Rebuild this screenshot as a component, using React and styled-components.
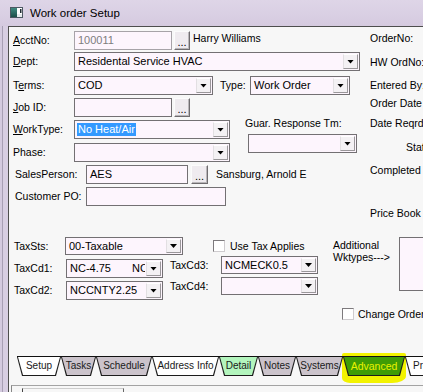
import React from 'react';
import styled, { createGlobalStyle } from 'styled-components';

const Global = createGlobalStyle`
  html, body { margin: 0; padding: 0; overflow: hidden; background: #d8cee2; }
  body { font-family: "Liberation Sans", Arial, sans-serif; color: #000; }
  * { box-sizing: border-box; }
`;

const Window = styled.div`
  width: 423px;
  height: 392px;
  display: flex;
  flex-direction: column;
  background: #d8cee2;
  overflow: hidden;
`;

const TitleBar = styled.div`
  height: 26px;
  flex-shrink: 0;
  display: flex;
  align-items: center;
  gap: 7px;
  padding: 0 0 1px 10px;
  background: linear-gradient(to bottom, #ded5e7 0%, #d9cfe3 60%, #d5cadf 100%);
`;

const TitleText = styled.span`
  font-size: 11.5px;
`;

const Body = styled.div`
  flex: 1;
  display: flex;
  min-height: 0;
`;

const Frame = styled.div`
  width: 8px;
  flex-shrink: 0;
  background: linear-gradient(to right, #d4cadf 0 2px, #a89fb4 2px 3px, #d8cee2 3px);
`;

const Client = styled.div`
  flex: 1;
  min-width: 0;
  display: flex;
  flex-direction: column;
  background: #f7f7f7;
  border-left: 1px solid #4e4e4e;
  border-top: 1px solid #4e4e4e;
  overflow: hidden;
  white-space: nowrap;
`;

const TopSection = styled.div`
  height: 210px;
  flex-shrink: 0;
  display: flex;
`;

const LeftForm = styled.div`
  width: 352px;
  flex-shrink: 0;
  padding-left: 4px;
  display: flex;
  flex-direction: column;
`;

const Row = styled.div`
  display: flex;
  align-items: center;
  height: ${p => p.$h ?? 19}px;
  margin-top: ${p => p.$mt ?? 0}px;
  flex-shrink: 0;
`;

const Label = styled.span`
  width: ${p => p.$w ?? 61}px;
  padding-left: ${p => p.$pl ?? 0}px;
  flex-shrink: 0;
  font-size: 10.5px;
  line-height: 13px;
`;

const Side = styled.span`
  margin-left: ${p => p.$ml ?? 0}px;
  font-size: 10.5px;
  line-height: 13px;
  margin-top: ${p => p.$mt ?? 0}px;
`;

const Field = styled.div`
  width: ${p => p.$w}px;
  height: ${p => p.$h ?? 19}px;
  flex-shrink: 0;
  display: flex;
  align-items: center;
  background: #fdf5fd;
  border: 1px solid ${p => (p.$disabled ? '#a7a3a8' : '#737073')};
  font-size: 11px;
  color: ${p => (p.$disabled ? '#7d7d7d' : '#000')};
  margin-left: ${p => p.$ml ?? 0}px;
  overflow: hidden;
`;

const Value = styled.span`
  flex: 1;
  min-width: 0;
  display: flex;
  padding-left: 3px;
  overflow: hidden;
  line-height: 13px;
`;

const Cell = styled.span`
  width: ${p => p.$w}px;
  flex-shrink: 0;
`;

const Selected = styled.span`
  background: #3399ff;
  color: #fff;
  padding: 0 1px;
  margin-left: -1px;
`;

const ArrowBtn = styled.span`
  width: 15px;
  align-self: stretch;
  margin: 1px;
  flex-shrink: 0;
  display: flex;
  align-items: center;
  justify-content: center;
  background: #f4f1f4;
  border: 1px solid;
  border-color: #ffffff #9a979a #9a979a #e2dfe2;
`;

const Tri = styled.span`
  width: 7px;
  height: 4px;
  background: #000;
  clip-path: polygon(0 0, 100% 0, 50% 100%);
`;

const DotsBtn = styled.div`
  width: ${p => p.$w ?? 16}px;
  height: 19px;
  flex-shrink: 0;
  margin-left: ${p => p.$ml ?? 2}px;
  display: flex;
  align-items: flex-end;
  justify-content: center;
  padding-bottom: 2px;
  background: #efebef;
  border: 1px solid;
  border-color: #fbfbfb #6f6c6f #6f6c6f #fbfbfb;
  box-shadow: inset -1px -1px 0 #b9b6b9;
  font-size: 11px;
  line-height: 10px;
`;

const Split = styled.div`
  display: flex;
`;

const SplitLeft = styled.div`
  width: 217px;
  flex-shrink: 0;
  display: flex;
  flex-direction: column;
`;

const GuarBlock = styled.div`
  margin-left: 15px;
  display: flex;
  flex-direction: column;
`;

const GuarLabel = styled.span`
  font-size: 10.5px;
  line-height: 13px;
`;

const GuarSelect = styled.div`
  margin: 4px 0 0 3px;
`;

const RightCol = styled.div`
  margin-left: 9px;
  display: flex;
  flex-direction: column;
`;

const RLabel = styled.span`
  font-size: 10.5px;
  line-height: 13px;
  margin-top: ${p => p.$mt}px;
  padding-left: ${p => p.$pl ?? 0}px;
`;

const TaxSection = styled.div`
  display: flex;
  padding-left: 5px;
  flex-shrink: 0;
`;

const TaxLeft = styled.div`
  width: 319px;
  flex-shrink: 0;
  display: flex;
  flex-direction: column;
`;

const TaxGrid = styled.div`
  display: flex;
`;

const TaxCol = styled.div`
  width: ${p => p.$w}px;
  flex-shrink: 0;
  display: flex;
  flex-direction: column;
`;

const Check = styled.span`
  width: 12px;
  height: 12px;
  flex-shrink: 0;
  margin-left: ${p => p.$ml ?? 0}px;
  background: #fff;
  border: 1px solid;
  border-color: #7d7a7d #cfcccf #cfcccf #7d7a7d;
`;

const Additional = styled.div`
  width: 66px;
  flex-shrink: 0;
  margin-top: 2px;
  font-size: 10.5px;
  line-height: 12px;
  display: flex;
  flex-direction: column;
`;

const AddBox = styled.div`
  width: 40px;
  height: 54px;
  flex-shrink: 0;
  background: #fdf5fd;
  border: 1px solid #737073;
`;

const ChangeRow = styled.div`
  display: flex;
  align-items: center;
  height: 12px;
  margin-top: 8px;
  padding-left: 333px;
  flex-shrink: 0;
`;

const TabStrip = styled.div`
  margin-top: auto;
  flex-shrink: 0;
  position: relative;
  z-index: 0;
`;

const TabRule = styled.div`
  height: 1px;
  margin-left: 8px;
  background: #111;
  position: relative;
  z-index: 2;
`;

const TabRow = styled.div`
  display: flex;
  padding-left: 8px;
  height: 19px;
`;

const TabSlot = styled.div`
  position: relative;
  flex-shrink: 0;
`;

const Highlight = styled.div`
  position: absolute;
  left: -1px;
  right: -1px;
  top: -4px;
  bottom: -7px;
  background: #f3f300;
  border-radius: 2px 2px 14px 8px / 2px 2px 7px 5px;
  z-index: 0;
`;

const Tab = styled.div`
  position: relative;
  z-index: 1;
  width: ${p => p.$w}px;
  height: 19px;
  padding: 0 1px 1px;
  background: #1c1c1c;
  clip-path: polygon(0 0, 100% 0, calc(100% - 5px) 100%, 5px 100%);
`;

const TabFace = styled.div`
  height: 100%;
  display: flex;
  align-items: center;
  justify-content: center;
  padding-bottom: 1px;
  background: ${p => p.$bg};
  color: ${p => p.$fg ?? '#1a1a1a'};
  font-size: ${p => p.$fs ?? 10}px;
  clip-path: polygon(0 0, 100% 0, calc(100% - 5px) 100%, 5px 100%);
`;

const BottomArea = styled.div`
  height: 16px;
  padding: 9px 0 0 2px;
`;

const BottomFrame = styled.div`
  height: 100%;
  border-top: 1px solid #a3a3a3;
  border-left: 1px solid #878787;
  padding: 2px 0 0 10px;
`;

const InnerBox = styled.div`
  width: 102px;
  height: 100%;
  border-left: 1px solid #454545;
  border-top: 1px solid #cdcdcd;
  border-right: 1px solid #676767;
`;

const Select = ({ w, h, children }) => (
  <Field $w={w} $h={h}>
    <Value>{children}</Value>
    <ArrowBtn><Tri /></ArrowBtn>
  </Field>
);

const AppIcon = () => (
  <svg width="13" height="11" viewBox="0 0 13 11">
    <defs>
      <linearGradient id="ig" x1="0" y1="0" x2="0" y2="1">
        <stop offset="0" stopColor="#3f8a80" />
        <stop offset="1" stopColor="#1c4f4a" />
      </linearGradient>
    </defs>
    <rect x="0.5" y="0.5" width="12" height="10" fill="#e6ecee" stroke="#4d5963" />
    <rect x="1" y="1" width="6" height="9" fill="url(#ig)" />
    <rect x="7" y="1" width="5" height="6" fill="#ffffff" />
    <rect x="10" y="2" width="1.5" height="4" fill="#1e2a30" />
  </svg>
);

const tabs = [
  { label: 'Setup', w: 44, bg: '#ffffff' },
  { label: 'Tasks', w: 35, bg: '#cbc3cb' },
  { label: 'Schedule', w: 56, bg: '#cbc3cb' },
  { label: 'Address Info', w: 67, bg: '#ffffff' },
  { label: 'Detail', w: 39, bg: '#b3f5bd' },
  { label: 'Notes', w: 38, bg: '#cbc3cb' },
  { label: 'Systems', w: 47, bg: '#cbc3cb' },
  { label: 'Advanced', w: 62, bg: '#3f9c05', fg: '#e9f200', fs: 10.5, marked: true },
  { label: 'Production', w: 64, bg: '#ffffff' },
];

export default function App() {
  return (
    <>
      <Global />
      <Window>
        <TitleBar>
          <AppIcon />
          <TitleText>Work order Setup</TitleText>
        </TitleBar>
        <Body>
          <Frame />
          <Client>
            <TopSection>
              <LeftForm>
                <Row $mt={4}>
                  <Label><u>A</u>cctNo:</Label>
                  <Field $w={98} $disabled><Value>100011</Value></Field>
                  <DotsBtn>...</DotsBtn>
                  <Side $ml={3} $mt={-5}>Harry Williams</Side>
                </Row>
                <Row $mt={2}>
                  <Label><u>D</u>ept:</Label>
                  <Select w={286}>Residental Service HVAC</Select>
                </Row>
                <Row $mt={5}>
                  <Label>T<u>e</u>rms:</Label>
                  <Select w={139}>COD</Select>
                  <Label $w={37} $pl={7}>Type:</Label>
                  <Select w={100}>Work Order</Select>
                </Row>
                <Row $mt={3}>
                  <Label><u>J</u>ob ID:</Label>
                  <Field $w={98}><Value /></Field>
                  <DotsBtn>...</DotsBtn>
                </Row>
                <Split>
                  <SplitLeft>
                    <Row $mt={3}>
                      <Label><u>W</u>orkType:</Label>
                      <Select w={156}><Selected>No Heat/Air</Selected></Select>
                    </Row>
                    <Row $mt={4}>
                      <Label>Phase:</Label>
                      <Select w={156} />
                    </Row>
                  </SplitLeft>
                  <GuarBlock>
                    <GuarLabel>Guar. Response Tm:</GuarLabel>
                    <GuarSelect>
                      <Select w={109} />
                    </GuarSelect>
                  </GuarBlock>
                </Split>
                <Row $mt={3}>
                  <Label $w={73} $pl={2}>SalesPerson:</Label>
                  <Field $w={102}><Value>AES</Value></Field>
                  <DotsBtn $w={17} $ml={3}>...</DotsBtn>
                  <Side $ml={8}>Sansburg, Arnold E</Side>
                </Row>
                <Row $mt={3}>
                  <Label $w={73} $pl={2}>Customer PO:</Label>
                  <Field $w={140}><Value /></Field>
                </Row>
              </LeftForm>
              <RightCol>
                <RLabel $mt={5}>OrderNo:</RLabel>
                <RLabel $mt={11}>HW OrdNo:</RLabel>
                <RLabel $mt={10}>Entered By:</RLabel>
                <RLabel $mt={5}>Order Date</RLabel>
                <RLabel $mt={7}>Date Reqrd</RLabel>
                <RLabel $mt={11} $pl={36}>Status:</RLabel>
                <RLabel $mt={10}>Completed</RLabel>
                <RLabel $mt={30}>Price Book</RLabel>
              </RightCol>
            </TopSection>

            <TaxSection>
              <TaxLeft>
                <Row $h={18}>
                  <Label $w={51}>TaxSts:</Label>
                  <Select w={118} h={18}>00-Taxable</Select>
                  <Check $ml={30} />
                  <Side $ml={5}>Use Tax Applies</Side>
                </Row>
                <TaxGrid>
                  <TaxCol $w={156}>
                    <Row $mt={4}>
                      <Label $w={52}>TaxCd1:</Label>
                      <Select w={97}>
                        <Cell $w={62}>NC-4.75</Cell>
                        <span>NCDOR</span>
                      </Select>
                    </Row>
                    <Row $mt={3}>
                      <Label $w={52}>TaxCd2:</Label>
                      <Select w={97}>NCCNTY2.25</Select>
                    </Row>
                  </TaxCol>
                  <TaxCol $w={160}>
                    <Row $mt={1} $h={18}>
                      <Label $w={51}>TaxCd3:</Label>
                      <Select w={97} h={18}>NCMECK0.5</Select>
                    </Row>
                    <Row $mt={3} $h={18}>
                      <Label $w={51}>TaxCd4:</Label>
                      <Select w={97} h={18} />
                    </Row>
                  </TaxCol>
                </TaxGrid>
              </TaxLeft>
              <Additional>
                <span>Additional</span>
                <span>Wktypes---&gt;</span>
              </Additional>
              <AddBox />
            </TaxSection>

            <ChangeRow>
              <Check />
              <Side $ml={4}>Change Order</Side>
            </ChangeRow>

            <TabStrip>
              <TabRule />
              <TabRow>
                {tabs.map(t => (
                  <TabSlot key={t.label}>
                    {t.marked && <Highlight />}
                    <Tab $w={t.w}>
                      <TabFace $bg={t.bg} $fg={t.fg} $fs={t.fs}>{t.label}</TabFace>
                    </Tab>
                  </TabSlot>
                ))}
              </TabRow>
              <BottomArea>
                <BottomFrame>
                  <InnerBox />
                </BottomFrame>
              </BottomArea>
            </TabStrip>
          </Client>
        </Body>
      </Window>
    </>
  );
}
